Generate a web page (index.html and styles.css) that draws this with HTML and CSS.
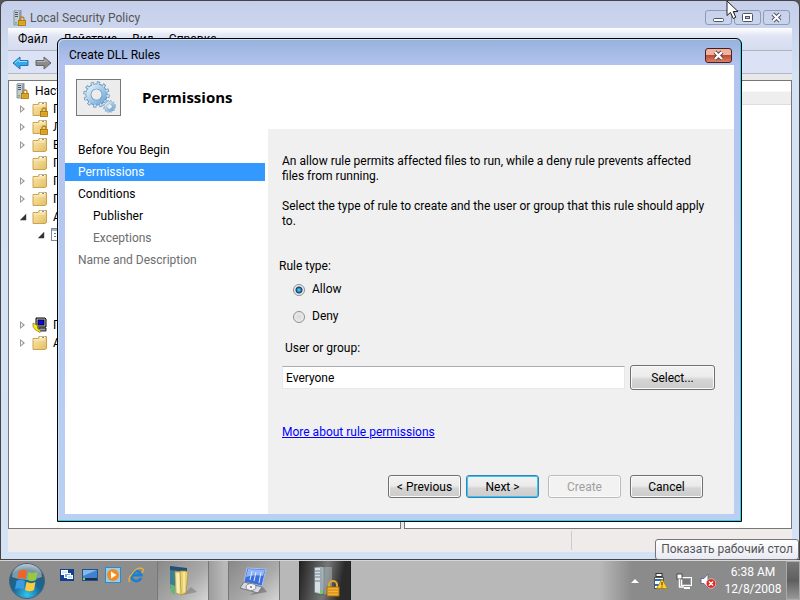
FILE: index.html
```
<!DOCTYPE html>
<html lang="ru">
<head>
  <meta charset="UTF-8">
  <title>Local Security Policy</title>
  <link rel="stylesheet" href="styles.css">
</head>
<body>
  <svg class="sprite" aria-hidden="true">
    <linearGradient id="g-folder" x1="0" y1="0" x2="1" y2="1">
      <stop offset="0" stop-color="#fbe9ae"/>
      <stop offset="1" stop-color="#e3bd62"/>
    </linearGradient>
    <linearGradient id="g-gear" x1="0" y1="0" x2="1" y2="1">
      <stop offset="0" stop-color="#dff0fb"/>
      <stop offset="1" stop-color="#6fa8d8"/>
    </linearGradient>
    <symbol id="lock" viewBox="0 0 8 10">
      <path d="M2 5V3a2 2 0 0 1 4 0v2" fill="none" stroke="#b98416" stroke-width="1.3"/>
      <rect x="0.5" y="4.5" width="7" height="5" fill="#eab02c" stroke="#a06f0a" stroke-width="0.8"/>
      <path d="M1.5 6.2h5M1.5 7.8h5" stroke="#c68a17" stroke-width="0.6"/>
    </symbol>
    <symbol id="server" viewBox="0 0 16 16">
      <path d="M3 1l2-1h5v14l-2 1H3z" fill="#c3ccd4" stroke="#76818b" stroke-width="0.8"/>
      <path d="M8 1.5V15l2-1V0.5z" fill="#8e9aa6"/>
      <path d="M4 2.5h3M4 4.5h3M4 6.5h3" stroke="#3f4f60" stroke-width="0.9"/>
      <rect x="4" y="12" width="2" height="1.5" fill="#5fc24c"/>
      <use href="#lock" x="7" y="6" width="8" height="10"/>
    </symbol>
    <symbol id="folder" viewBox="0 0 16 16">
      <path d="M1 3.5h5l1-2h7.5v12L13 14.5H1z" fill="url(#g-folder)" stroke="#c69a45" stroke-width="0.9"/>
      <rect x="8" y="1.8" width="5" height="1.6" fill="#fff"/>
      <rect x="10" y="2" width="2" height="1" fill="#4a9bd6"/>
      <path d="M1.5 5h12" stroke="#fdf4d2" stroke-width="0.8"/>
    </symbol>
    <symbol id="folder-lock" viewBox="0 0 16 16">
      <use href="#folder" width="16" height="16"/>
      <use href="#lock" x="8" y="6" width="8" height="10"/>
    </symbol>
    <symbol id="sheet" viewBox="0 0 16 16">
      <rect x="1.5" y="1.5" width="13" height="12" fill="#fff" stroke="#7d8a99"/>
      <path d="M2 3h12" stroke="#9fb2c8" stroke-width="2"/>
      <path d="M4 6.5h8M4 9.5h8" stroke="#6a7c91" stroke-dasharray="2 1"/>
    </symbol>
    <symbol id="computer" viewBox="0 0 16 16">
      <path d="M4 1h9l1 1v8H4z" fill="#b8b8b8" stroke="#000"/>
      <rect x="6" y="3" width="6" height="5" fill="#0a0ae0" stroke="#000" stroke-width="0.8"/>
      <path d="M7 11h7v3H6z" fill="#9a9a9a" stroke="#000" stroke-width="0.8"/>
      <path d="M1 6l2 1 3 2-1 2 4 3-1 1.5-5-3-2-3z" fill="#ffe818" stroke="#6b6000" stroke-width="0.6"/>
    </symbol>
    <symbol id="gear" viewBox="-12 -12 24 24">
      <circle r="10" fill="none" stroke="#5d8fb8" stroke-width="3.4" stroke-dasharray="2.7 2.536"/>
      <circle r="7.2" fill="none" stroke="#5d8fb8" stroke-width="5.2"/>
      <circle r="7.2" fill="none" stroke="url(#g-gear)" stroke-width="4"/>
      <circle r="10" fill="none" stroke="#cfe5f5" stroke-width="2" stroke-dasharray="1.7 3.536" stroke-dashoffset="-0.5"/>
    </symbol>
  </svg>

  <div class="desktop">
    <main class="window">
      <header class="titlebar">
        <svg class="icon"><use href="#server"/></svg>
        <h1>Local Security Policy</h1>
        <div class="caption-buttons">
          <button class="caption" aria-label="Minimize">
            <svg width="13" height="13" viewBox="0 0 13 13"><rect x="1.5" y="7.5" width="10" height="3" rx="1" fill="#fff" stroke="#4b5468"/></svg>
          </button>
          <button class="caption" aria-label="Maximize">
            <svg width="13" height="13" viewBox="0 0 13 13"><rect x="1.5" y="2.5" width="10" height="8" rx="1" fill="#fff" stroke="#4b5468"/><rect x="4.5" y="5.5" width="4" height="2" fill="#b9c6e6" stroke="#4b5468"/></svg>
          </button>
          <button class="caption" aria-label="Close">
            <svg width="13" height="13" viewBox="0 0 13 13"><path d="M3 3l7 7M10 3l-7 7" stroke="#4b5468" stroke-width="4"/><path d="M3 3l7 7M10 3l-7 7" stroke="#fff" stroke-width="2"/></svg>
          </button>
        </div>
      </header>

      <nav class="menubar">
        <button>Файл</button>
        <button>Действие</button>
        <button>Вид</button>
        <button>Справка</button>
      </nav>

      <div class="toolbar">
        <button aria-label="Back">
          <svg width="17" height="14" viewBox="0 0 17 14"><path d="M1 7l7-6v3.5h8v5H8V13z" fill="#35a8ea" stroke="#2273b8"/><path d="M3 7l4-3.5v2h8" fill="none" stroke="#9ddcff"/></svg>
        </button>
        <button aria-label="Forward">
          <svg width="17" height="14" viewBox="0 0 17 14"><path d="M16 7L9 1v3.5H1v5h8V13z" fill="#8b8b8b" stroke="#666"/><path d="M2 5.5h8v-2l3 3" fill="none" stroke="#b9b9b9"/></svg>
        </button>
      </div>

      <div class="panes">
        <ul class="tree">
          <li class="root"><svg class="icon"><use href="#server"/></svg>Наст</li>
          <li><i class="arrow"></i><svg class="icon"><use href="#folder-lock"/></svg>П</li>
          <li><i class="arrow"></i><svg class="icon"><use href="#folder-lock"/></svg>Л</li>
          <li><i class="arrow"></i><svg class="icon"><use href="#folder"/></svg>Б</li>
          <li><i class="arrow none"></i><svg class="icon"><use href="#folder"/></svg>П</li>
          <li><i class="arrow"></i><svg class="icon"><use href="#folder"/></svg>П</li>
          <li><i class="arrow"></i><svg class="icon"><use href="#folder"/></svg>П</li>
          <li><i class="arrow open"></i><svg class="icon"><use href="#folder"/></svg>A</li>
          <li class="child"><i class="arrow open"></i><svg class="icon"><use href="#sheet"/></svg></li>
          <li class="after-group"><i class="arrow"></i><svg class="icon"><use href="#computer"/></svg>П</li>
          <li><i class="arrow"></i><svg class="icon"><use href="#folder"/></svg>A</li>
        </ul>
        <div class="list"><div class="list-head"></div></div>
      </div>
      <div class="statusbar"><span></span><span></span><span></span></div>
    </main>

    <footer class="taskbar">
      <button class="start" aria-label="Start">
        <svg width="38" height="38" viewBox="0 0 38 38">
          <defs>
            <radialGradient id="g-orb" cx="0.5" cy="0.9" r="0.9">
              <stop offset="0" stop-color="#35c4ea"/>
              <stop offset="0.45" stop-color="#15689b"/>
              <stop offset="0.8" stop-color="#315870"/>
              <stop offset="1" stop-color="#a9bcc8"/>
            </radialGradient>
          </defs>
          <circle cx="19" cy="19" r="17.5" fill="url(#g-orb)" stroke="#46647a"/>
          <path d="M4 15a15 13 0 0 1 30 0q-15 6-30 0z" fill="#dbe7ee" opacity="0.45"/>
          <path d="M11 9q4-2.5 8 0l-1.5 8.5q-4-2.5-8.5-0.5z" fill="#ef6428"/>
          <path d="M20.5 10q4 2.5 9-0.5L28 18q-4.5 2.5-9-0.5z" fill="#98c83e"/>
          <path d="M8.5 18.8q4-2 8.5 0.3l-1.5 8.4q-4-2.3-8.5-0.3z" fill="#3e9be0"/>
          <path d="M18.5 19.8q4.5 2.5 9 0.3L26 28q-4.5 2.7-9 0z" fill="#fbcb3c"/>
        </svg>
      </button>

      <div class="quick">
        <button aria-label="Switch windows">
          <svg width="16" height="16" viewBox="0 0 16 16"><rect x="1" y="2" width="14" height="12" fill="#123f8e"/><rect x="2.5" y="3.5" width="6" height="4" fill="#d7e8fa" stroke="#fff"/><rect x="5.5" y="6.5" width="6" height="4" fill="#79abe0" stroke="#fff"/><rect x="8.5" y="8.5" width="5" height="3" fill="#c2dbf4" stroke="#fff"/></svg>
        </button>
        <button aria-label="Show desktop">
          <svg width="16" height="16" viewBox="0 0 16 16"><rect x="0.5" y="2.5" width="15" height="11" fill="#3f83cf" stroke="#24508b"/><path d="M1 3h14L1 9z" fill="#85b7ea"/><path d="M1 12h14" stroke="#1b2f4c" stroke-width="2"/><rect x="1" y="11" width="2" height="2" fill="#7fd05f"/></svg>
        </button>
        <button aria-label="Media player">
          <svg width="16" height="16" viewBox="0 0 16 16"><rect x="0.5" y="0.5" width="15" height="15" fill="#8fd0f3" stroke="#2c8ccb"/><circle cx="8" cy="8" r="6" fill="#f58a1f"/><path d="M6 4.5v7L11.5 8z" fill="#fff"/></svg>
        </button>
        <button aria-label="Internet Explorer">
          <svg width="16" height="16" viewBox="0 0 16 16"><path d="M13 11A5 5 0 1 1 13.3 8H5" fill="none" stroke="#1c7fd6" stroke-width="2.8"/><path d="M2 15Q-1 13 4 6.5T14.5 1.5Q16.5 3 13.5 6" fill="none" stroke="#f0b429" stroke-width="1.3"/></svg>
        </button>
      </div>

      <div class="tasks">
        <button class="task" aria-label="Explorer">
          <svg width="32" height="34" viewBox="0 0 32 34">
            <path d="M16 31l14-3-6-5z" fill="#6f6f6f" opacity="0.5"/>
            <path d="M3 2l5 1v25l-5-4z" fill="#3b7f93"/><path d="M3 2l17 2v4L3 6z" fill="#274f74"/>
            <path d="M3 20l5 2v9l-4-3z" fill="#67b579"/>
            <path d="M8 8h6l1 23-6-2z" fill="#f4e49a" stroke="#b59b46" stroke-width="0.7"/>
            <path d="M13 7h6l2 2-2 20-5 2z" fill="#e9d06f" stroke="#a98c38" stroke-width="0.7"/>
            <path d="M11 9v20M17 8v20" stroke="#fff8cf"/>
          </svg>
        </button>
        <button class="task" aria-label="Setup">
          <svg width="32" height="34" viewBox="0 0 32 34">
            <path d="M12 31l17-3-4-5z" fill="#555" opacity="0.5"/>
            <path d="M9 4l19 1-4 17-18-4z" fill="#3b6fdc" stroke="#a9c0f0"/>
            <path d="M10 5l17 1-2 6q-9-2-17 1z" fill="#91b4f6"/>
            <path d="M14 7l-2 9M18 8l-2 9M23 8l-2 11" stroke="#dfeaff"/>
            <path d="M6 18l18 5-4 6-18-5z" fill="#d7dbe0" stroke="#72777f"/>
            <ellipse cx="13" cy="23" rx="5" ry="3.5" fill="#f3f3f3" stroke="#888"/><circle cx="13" cy="23" r="1" fill="#777"/>
          </svg>
        </button>
        <button class="task active" aria-label="Local Security Policy">
          <svg width="32" height="34" viewBox="0 0 32 34">
            <path d="M5 3l7-1 3 1v27l-3 1-7-2z" fill="#9aa9b0" stroke="#4f5b61"/>
            <path d="M6 4h5v25l-5-1z" fill="#d5dfe3"/><path d="M6 7h5M6 10h5M6 13h5M6 17h5" stroke="#6f7f88"/>
            <path d="M12 3h11v24l-8 4z" fill="#b9c4c8" opacity="0.45"/>
            <rect x="11" y="27" width="3" height="2" fill="#5ee02c"/>
            <path d="M20 24v-3a4 4 0 0 1 8 0v3" fill="none" stroke="#e8a82a" stroke-width="2"/>
            <rect x="18" y="23" width="12" height="9" fill="#f3b234" stroke="#9f6a0b"/><path d="M19 26h10M19 29h10" stroke="#c98514"/>
          </svg>
        </button>
      </div>

      <div class="tray">
        <button aria-label="Show hidden icons"><svg width="10" height="16" viewBox="0 0 10 16"><path d="M1 10l4-4 4 4z" fill="#fff"/></svg></button>
        <svg width="16" height="16" viewBox="0 0 16 16"><rect x="4" y="0.5" width="6" height="3" fill="#fff" stroke="#333"/><rect x="2.5" y="4.5" width="9" height="11" fill="#fff" stroke="#555"/><path d="M3 7h8M3 12h4" stroke="#1d6fc4" stroke-width="2"/><path d="M10 6l5.5 9.5h-11z" fill="#ffd32b" stroke="#a87a00" stroke-width="0.7"/><path d="M10 9v3.5M10 13.5v1" stroke="#222"/></svg>
        <svg width="16" height="16" viewBox="0 0 16 16"><rect x="5.5" y="4.5" width="10" height="8" fill="#9aa0a6" stroke="#fff"/><rect x="7" y="6" width="7" height="5" fill="#777"/><path d="M8 15h6" stroke="#fff" stroke-width="2"/><rect x="1" y="1" width="5" height="5" fill="#fff" stroke="#333" stroke-width="0.8"/><path d="M3.5 6v8H8" fill="none" stroke="#fff" stroke-width="1.5"/></svg>
        <svg width="16" height="16" viewBox="0 0 16 16"><path d="M1 5.5h3L8 1v14L4 10.5H1z" fill="#fff" stroke="#4c5f91" stroke-width="0.8"/><circle cx="11" cy="10.5" r="4.8" fill="#e02a20" stroke="#fff" stroke-width="0.5"/><path d="M9 8.5l4 4M13 8.5l-4 4" stroke="#fff" stroke-width="1.5"/></svg>
      </div>
      <div class="clock"><span>6:38 AM</span><span>12/8/2008</span></div>
      <button class="peek" aria-label="Показать рабочий стол"></button>
    </footer>
  </div>

  <section class="dialog">
    <header class="dialog-title">
      <h2>Create DLL Rules</h2>
      <button class="dialog-close" aria-label="Close">
        <svg width="13" height="11" viewBox="0 0 13 11"><path d="M3 2l7 7M10 2l-7 7" stroke="#5c3a3a" stroke-width="4"/><path d="M3 2l7 7M10 2l-7 7" stroke="#fff" stroke-width="2.4"/></svg>
      </button>
    </header>

    <div class="dialog-body">
      <div class="banner">
        <div class="banner-icon">
          <svg width="42" height="34" viewBox="0 0 42 34">
            <use href="#gear" x="5" y="1" width="27" height="27"/>
            <use href="#gear" x="25" y="20" width="13" height="13"/>
          </svg>
        </div>
        <h3>Permissions</h3>
      </div>

      <div class="columns">
        <ol class="steps">
          <li>Before You Begin</li>
          <li class="current">Permissions</li>
          <li>Conditions</li>
          <li class="sub">Publisher</li>
          <li class="sub pending">Exceptions</li>
          <li class="pending">Name and Description</li>
        </ol>

        <form class="page">
          <p>An allow rule permits affected files to run, while a deny rule prevents affected files from running.</p>
          <p>Select the type of rule to create and the user or group that this rule should apply to.</p>

          <fieldset>
            <legend>Rule type:</legend>
            <label><input type="radio" name="rule" checked>Allow</label>
            <label><input type="radio" name="rule">Deny</label>
          </fieldset>

          <label class="user-label" for="user">User or group:</label>
          <div class="user-row">
            <input id="user" type="text" value="Everyone">
            <button type="button" class="btn">Select...</button>
          </div>

          <a class="more" href="#">More about rule permissions</a>

          <div class="actions">
            <button type="button" class="btn">&lt; Previous</button>
            <button type="button" class="btn btn-default">Next &gt;</button>
            <button type="button" class="btn" disabled>Create</button>
            <button type="button" class="btn">Cancel</button>
          </div>
        </form>
      </div>
    </div>
  </section>

  <div class="tooltip">Показать рабочий стол</div>

  <svg class="cursor" width="14" height="22" viewBox="0 0 14 22"><path d="M1 1v14.5l3.5-3 2.7 6 2.6-1.2-2.6-5.8H12z" fill="#fff" stroke="#222"/></svg>
</body>
</html>
```

FILE: styles.css
```
* {
  box-sizing: border-box;
}

body {
  margin: 0;
  height: 100vh;
  overflow: hidden;
  position: relative;
  background: #555;
  color: #000;
  font: 12px/15px Roboto, "Noto Sans", sans-serif;
}

h1, h2, h3, p, ul, ol {
  margin: 0;
  padding: 0;
  font-size: 12px;
  font-weight: normal;
}

ul, ol {
  list-style: none;
}

button {
  padding: 0;
  border: none;
  background: none;
  font: inherit;
  color: inherit;
}

svg {
  display: block;
  flex: none;
}

.sprite {
  position: absolute;
  width: 0;
  height: 0;
}

.icon {
  width: 16px;
  height: 16px;
}

.desktop {
  display: flex;
  flex-direction: column;
  height: 100%;
}

/* main window */
.window {
  flex: 1;
  min-height: 0;
  display: flex;
  flex-direction: column;
  padding: 0 7px 7px;
  border: 1px solid #444;
  border-radius: 7px 7px 0 0;
  background: linear-gradient(#c6cfea, #d4e3f4 80px, #d4e2f5);
}

.titlebar {
  display: flex;
  align-items: center;
  gap: 3px;
  height: 27px;
  padding: 6px 2px 0 3px;
  color: #555;
}

.titlebar h1 {
  line-height: 16px;
}

.caption-buttons {
  display: flex;
  gap: 2px;
  margin-left: auto;
}

.caption {
  display: flex;
  align-items: center;
  justify-content: center;
  width: 27px;
  height: 15px;
  border: 1px solid #8d9bb5;
  border-radius: 3px;
}

.menubar {
  display: flex;
  gap: 15px;
  height: 23px;
  padding: 0 10px;
  border-bottom: 1px solid #b0b4c0;
  background: linear-gradient(#fff, #e0e5f5 8px, #d4dcee);
}

.toolbar {
  display: flex;
  align-items: center;
  gap: 6px;
  height: 23px;
  padding: 1px 0 0 4px;
  border-bottom: 1px solid #b3b7c6;
  background: #dce2f5;
}

.panes {
  flex: 1;
  min-height: 0;
  display: flex;
  gap: 3px;
  padding-top: 6px;
  background: #e8e8e8;
}

.tree,
.list {
  border: 1px solid #777;
  background: #fff;
  overflow: hidden;
}

.tree {
  flex: 1 0 6px;
  padding-top: 1px;
  white-space: nowrap;
}

.tree li {
  display: flex;
  align-items: center;
  gap: 5px;
  height: 18px;
  padding-left: 10px;
}

.tree .root {
  padding-left: 5px;
}

.tree .child {
  padding-left: 28px;
}

.tree .after-group {
  margin-top: 72px;
}

.arrow {
  width: 8px;
  height: 8px;
  background: #999;
  clip-path: path("M1 0L6 4L1 8ZM2 2V6L4 4Z");
}

.arrow.open {
  background: #333;
  clip-path: polygon(90% 10%, 90% 90%, 10% 90%);
}

.arrow.none {
  visibility: hidden;
}

.list {
  flex: 1;
}

.list-head {
  height: 24px;
  background: linear-gradient(#fff 10px, #eee 11px);
  border-bottom: 1px solid #ddd;
}

.statusbar {
  display: flex;
  height: 23px;
  padding: 2px 0;
  background: #f0ebeb;
}

.statusbar span {
  width: 72%;
  border-right: 1px solid #ccc;
}

.statusbar span + span {
  width: 14%;
  border: none;
}

/* dialog */
.dialog {
  position: absolute;
  inset: 38px 58px 78px 57px;
  display: flex;
  flex-direction: column;
  padding: 0 6px 6px;
  border: 1px solid #000;
  border-radius: 6px 6px 0 0;
  background: linear-gradient(#96b2dc, #b3c3ee 26px, #b9d0f2);
  box-shadow: inset -1px -1px #1fd5ee, inset 1px 1px #c5e3f7;
}

.dialog-title {
  display: flex;
  align-items: center;
  justify-content: space-between;
  height: 26px;
  padding: 6px 3px 0 5px;
}

.dialog-close {
  display: flex;
  align-items: center;
  justify-content: center;
  width: 27px;
  height: 15px;
  border: 1px solid #4d1c1c;
  border-radius: 3px;
  background: linear-gradient(#eeb3a2 45%, #c04a32 50%, #d98266);
}

.dialog-body {
  flex: 1;
  display: flex;
  flex-direction: column;
  margin: 0 1px 1px;
  background: #fff;
}

.banner {
  display: flex;
  align-items: center;
  gap: 21px;
  height: 64px;
  padding-left: 11px;
}

.banner-icon {
  display: flex;
  align-items: center;
  justify-content: center;
  width: 45px;
  height: 37px;
  border: 1px solid #777;
  background: #ececec;
}

.banner h3 {
  font: bold 15px/18px "Open Sans", "Noto Sans", sans-serif;
}

.columns {
  flex: 1;
  display: flex;
}

.steps {
  width: 203px;
  padding-top: 12px;
}

.steps li {
  width: 200px;
  height: 18px;
  margin-bottom: 4px;
  padding-left: 13px;
  line-height: 18px;
}

.steps .current {
  background: #3399ff;
  color: #fff;
}

.steps .sub {
  padding-left: 28px;
}

.steps .pending {
  color: #6d6d6d;
}

.page {
  flex: 1;
  display: flex;
  flex-direction: column;
  padding: 25px 19px 16px 14px;
  background: #f0f0f0;
}

.page p {
  margin-bottom: 15px;
}

fieldset {
  display: flex;
  flex-direction: column;
  gap: 12px;
  margin: 15px 0 0;
  padding: 8px 0 0 11px;
  border: none;
}

legend {
  margin-left: -14px;
  padding: 0;
}

fieldset label {
  display: flex;
  align-items: center;
  gap: 7px;
}

input[type="radio"] {
  appearance: none;
  width: 12px;
  height: 12px;
  margin: 0;
  border: 1px solid #8e8f8f;
  border-radius: 50%;
  background: radial-gradient(#d8d8d8, #f4f4f4);
}

input[type="radio"]:checked {
  background: radial-gradient(circle, #49b8ee 1px, #0c3c66 3px, #eee 4px);
}

.user-label {
  margin: 17px 0 9px 3px;
}

.user-row {
  display: flex;
  align-items: center;
  gap: 5px;
}

.user-row input {
  flex: 1;
  min-width: 0;
  height: 23px;
  padding: 0 3px;
  border: 1px solid #e3e9ef;
  border-top-color: #abadb3;
  background: #fff;
  font: inherit;
}

.user-row .btn {
  width: 85px;
  height: 25px;
}

.btn {
  width: 73px;
  height: 23px;
  padding-top: 2px;
  border: 1px solid #707070;
  border-radius: 3px;
  background: linear-gradient(#f2f2f2, #ebebeb 45%, #d4d4d4 60%, #cccccc);
  box-shadow: inset 0 0 0 1px #fafafa;
}

.btn-default {
  border-color: #3c7fb1;
  box-shadow: inset 0 0 0 1px #36c6f4;
}

.btn:disabled {
  border-color: #bcbcbc;
  background: #f2f2f2;
  color: #a0a0a0;
}

.more {
  align-self: flex-start;
  margin-top: 35px;
  color: #0000ff;
}

.actions {
  display: flex;
  justify-content: flex-end;
  gap: 9px;
  margin: auto 12px 0 0;
}

.actions .btn:first-child {
  margin-right: -4px;
}

/* taskbar */
.taskbar {
  display: flex;
  align-items: center;
  height: 40px;
  border-top: 1px solid #d6d6d6;
  background: linear-gradient(to right, #8d8d8d 25%, #b8b8b8 28%, #b8b8b8 75%, #8b8b8b 79%);
  color: #fff;
}

.start {
  margin-left: 8px;
}

.quick {
  display: flex;
  align-self: flex-start;
  gap: 7px;
  padding: 6px 13px 0 13px;
}

.tasks {
  display: flex;
  gap: 19px;
  align-self: stretch;
}

.task {
  display: flex;
  align-items: center;
  justify-content: center;
  width: 52px;
  border: 1px solid #777;
  border-width: 0 1px;
  background: linear-gradient(135deg, #888, #aaa 60%, #d5d5d5);
}

.task.active {
  background: linear-gradient(100deg, #222, #777 50%, #2a2a2a 80%);
  border-color: #222;
}

.tray {
  display: flex;
  align-items: center;
  gap: 8px;
  margin-left: auto;
}

.tray button {
  margin-right: 4px;
}

.clock {
  display: flex;
  flex-direction: column;
  align-items: center;
  gap: 2px;
  width: 66px;
  margin-left: 4px;
  padding-top: 1px;
}

.peek {
  align-self: stretch;
  width: 14px;
  border: 1px solid #aaa;
  background: linear-gradient(#777, #5f5f5f 50%, #999);
}

.tooltip {
  position: absolute;
  right: 1px;
  bottom: 40px;
  padding: 2px 5px;
  border: 1px solid #767676;
  border-radius: 3px;
  background: linear-gradient(#fff, #e8e9f4);
  color: #555;
}

.cursor {
  position: absolute;
  top: 0;
  right: 60px;
}
```
